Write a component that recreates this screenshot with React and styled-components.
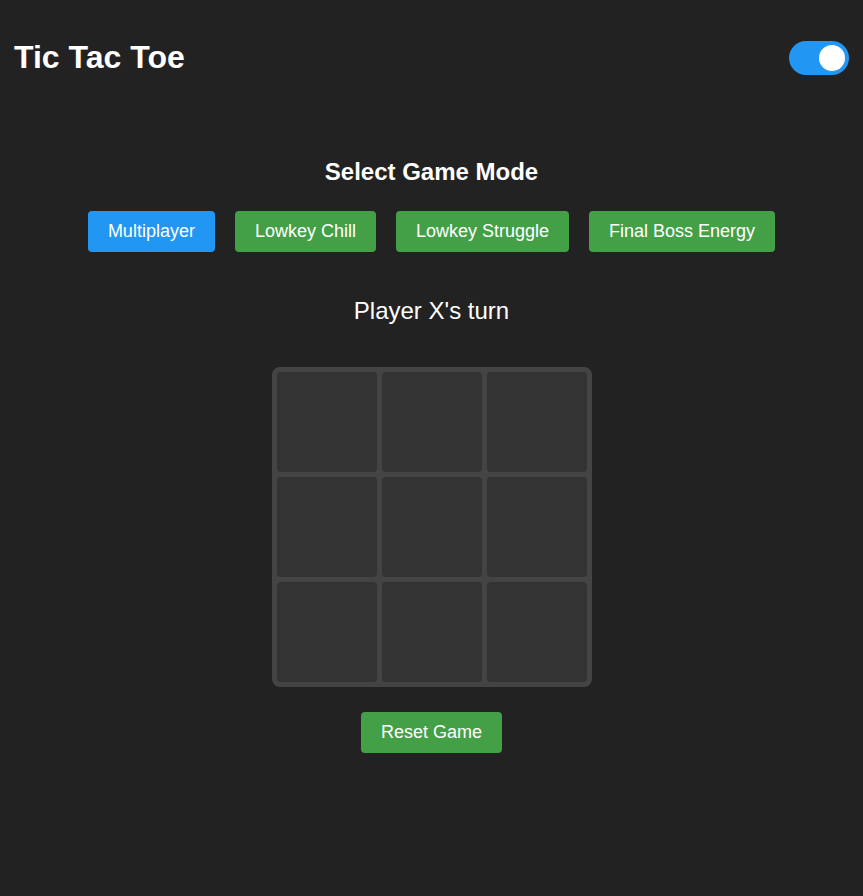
import React, { useState } from "react";
import styled, { createGlobalStyle } from "styled-components";

const GlobalStyle = createGlobalStyle`
    html, body {
        margin: 0;
        padding: 0;
        background: #222222;
        color: #ffffff;
        font-family: "Liberation Sans", Arial, sans-serif;
    }
`;

const modes = ["Multiplayer", "Lowkey Chill", "Lowkey Struggle", "Final Boss Energy"];

const App = () => {
    const [mode, setMode] = useState("Multiplayer");
    const [dark, setDark] = useState(true);
    const [cells, setCells] = useState(Array(9).fill(null));
    const [xTurn, setXTurn] = useState(true);

    const play = (i) => {
        if (cells[i]) return;
        const next = cells.slice();
        next[i] = xTurn ? "X" : "O";
        setCells(next);
        setXTurn(!xTurn);
    };

    const reset = () => {
        setCells(Array(9).fill(null));
        setXTurn(true);
    };

    return (
        <>
            <GlobalStyle />
            <Header>
                <Title>Tic Tac Toe</Title>
                <Switch>
                    <input
                        type="checkbox"
                        checked={dark}
                        onChange={() => setDark(!dark)}
                    />
                    <Slider />
                </Switch>
            </Header>

            <Main>
                <ModeTitle>Select Game Mode</ModeTitle>
                <ModeRow>
                    {modes.map((m) => (
                        <Button
                            key={m}
                            $active={m === mode}
                            onClick={() => setMode(m)}
                        >
                            {m}
                        </Button>
                    ))}
                </ModeRow>

                <Status>Player {xTurn ? "X" : "O"}'s turn</Status>

                <Board>
                    {cells.map((c, i) => (
                        <Cell key={i} onClick={() => play(i)}>
                            {c}
                        </Cell>
                    ))}
                </Board>

                <ResetButton onClick={reset}>Reset Game</ResetButton>
            </Main>
        </>
    );
};

export default App;

const Header = styled.header`
    height: 115px;
    padding: 0 14px;
    display: flex;
    align-items: center;
    justify-content: space-between;
`;

const Title = styled.h1`
    margin: 0;
    font-size: 32px;
    font-weight: bold;
`;

const Switch = styled.label`
    position: relative;
    display: inline-block;
    width: 60px;
    height: 34px;
    input {
        opacity: 0;
        width: 0;
        height: 0;
    }
`;

const Slider = styled.span`
    position: absolute;
    inset: 0;
    cursor: pointer;
    background: #ccc;
    border-radius: 34px;
    &::before {
        content: "";
        position: absolute;
        width: 26px;
        height: 26px;
        left: 4px;
        bottom: 4px;
        background: #fff;
        border-radius: 50%;
        transition: transform 0.2s;
    }
    input:checked + & {
        background: #2196f3;
    }
    input:checked + &::before {
        transform: translateX(26px);
    }
`;

const Main = styled.main`
    display: flex;
    flex-direction: column;
    align-items: center;
`;

const ModeTitle = styled.h2`
    margin: 43px 0 25px;
    font-size: 24px;
    font-weight: bold;
`;

const ModeRow = styled.div`
    display: flex;
    gap: 20px;
`;

const Button = styled.button`
    padding: 10px 20px;
    border: none;
    border-radius: 4px;
    font-family: inherit;
    font-size: 18px;
    color: #fff;
    cursor: pointer;
    background: ${(p) => (p.$active ? "#2196f3" : "#43a047")};
`;

const Status = styled.div`
    margin: 45px 0 42px;
    font-size: 24px;
`;

const Board = styled.div`
    display: grid;
    grid-template-columns: repeat(3, 100px);
    grid-template-rows: repeat(3, 100px);
    gap: 5px;
    padding: 5px;
    background: #444;
    border-radius: 8px;
`;

const Cell = styled.div`
    background: #333;
    border-radius: 4px;
    display: flex;
    align-items: center;
    justify-content: center;
    font-size: 48px;
    font-weight: bold;
    cursor: pointer;
`;

const ResetButton = styled(Button)`
    margin-top: 25px;
    background: #43a047;
`;
